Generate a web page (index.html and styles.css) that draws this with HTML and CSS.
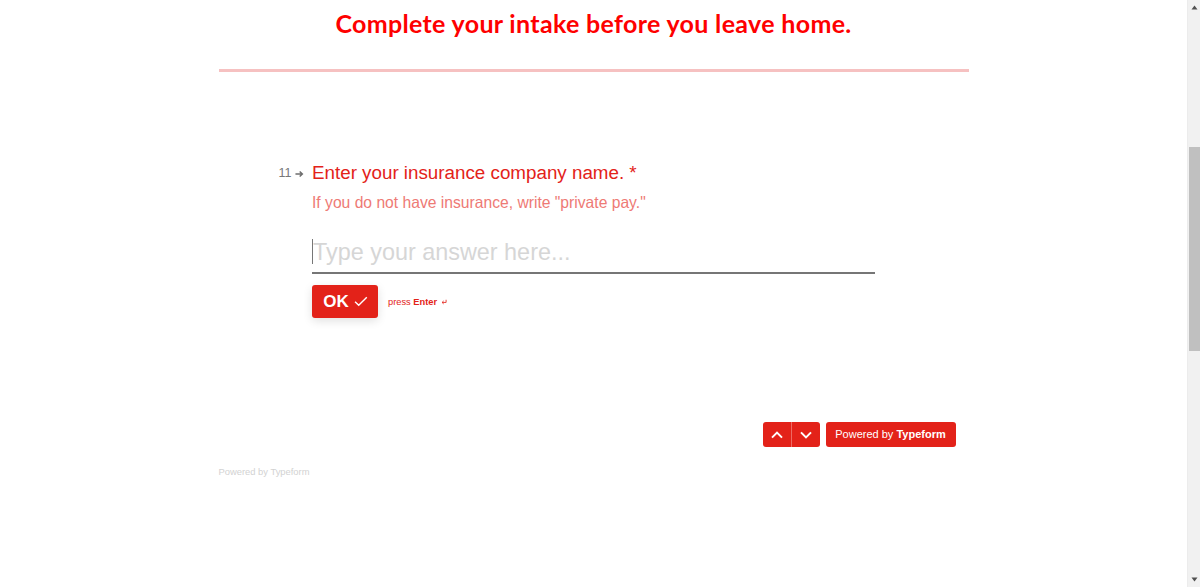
FILE: index.html
```html
<!DOCTYPE html>
<html lang="en">
<head>
<meta charset="utf-8">
<title>Intake</title>
<link rel="stylesheet" href="styles.css">
</head>
<body>
<div class="page">
  <main class="main">
    <div class="column">
      <h1 class="title">Complete your intake before you leave home.</h1>
      <div class="rule"></div>
      <section class="form">
        <div class="question">
          <div class="number"><span>11</span>
            <svg class="arrow" viewBox="0 0 10 8" width="9" height="8"><path d="M0.5 4H8M5.2 1.2L8.2 4L5.2 6.8" fill="none" stroke="#6d6d6d" stroke-width="1.6"/></svg>
          </div>
          <div class="content">
            <div class="label">Enter your insurance company name. <span class="star">*</span></div>
            <div class="hint">If you do not have insurance, write "private pay."</div>
            <div class="input"><span class="caret"></span><span class="placeholder">Type your answer here...</span></div>
            <div class="actions">
              <button class="ok" type="button">OK
                <svg viewBox="0 0 16 12" width="14" height="11"><path d="M1.2 6.4L5.4 10.4L14.6 1.2" fill="none" stroke="#fff" stroke-width="1.6"/></svg>
              </button>
              <span class="press"><span>press <b>Enter</b></span>
                <svg viewBox="0 0 8 8" width="6" height="6"><path d="M6.8 1V4.6H1.6M3.6 2.6L1.4 4.6L3.6 6.6" fill="none" stroke="#e32219" stroke-width="1.1"/></svg>
              </span>
            </div>
          </div>
        </div>
        <div class="footer-bar">
          <div class="nav">
            <button class="nav-btn" type="button"><svg viewBox="0 0 12 8" width="12" height="8"><path d="M1 6.6L6 1.6L11 6.6" fill="none" stroke="#fff" stroke-width="2"/></svg></button>
            <button class="nav-btn nav-next" type="button"><svg viewBox="0 0 12 8" width="12" height="8"><path d="M1 1.4L6 6.4L11 1.4" fill="none" stroke="#fff" stroke-width="2"/></svg></button>
          </div>
          <div class="brand">Powered by <b>Typeform</b></div>
        </div>
      </section>
      <div class="powered">Powered by Typeform</div>
    </div>
  </main>
  <aside class="scrollbar">
    <svg class="sb-arrow" viewBox="0 0 7 5" width="7" height="5"><path d="M3.5 0.5L6.5 4.5H0.5Z" fill="#505050"/></svg>
    <div class="track"><div class="thumb"></div></div>
    <svg class="sb-arrow" viewBox="0 0 7 5" width="7" height="5"><path d="M0.5 0.5H6.5L3.5 4.5Z" fill="#505050"/></svg>
  </aside>
</div>
</body>
</html>
```
FILE: styles.css
```css
* { box-sizing: border-box; }
html, body { margin: 0; padding: 0; height: 100%; background: #fff; overflow: hidden; }
body { font-family: "Liberation Sans", Arial, sans-serif; }
.page { display: flex; height: 587px; }
.main { flex: 1; min-width: 0; display: flex; justify-content: center; }
.column { width: 750px; }
.title {
  margin: 0; padding-top: 8px; height: 69px;
  font-family: Lato, sans-serif; font-weight: 700; font-size: 25px; line-height: 30px;
  letter-spacing: 0.33px;
  color: #fe0000; text-align: center; padding-left: 1px; padding-right: 1px;
}
.rule { height: 3px; background: #f6c1c1; }
.form { padding: 90px 13px 0 60px; }
.question { display: flex; }
.number {
  width: 33.5px; padding-top: 4px; display: flex; align-items: flex-start; gap: 4px;
  font-size: 12.5px; line-height: 15px; color: #777;
}
.arrow { margin-top: 4px; }
.content { width: 563px; }
.label { font-size: 18.8px; line-height: 22px; color: #e32219; }
.star { color: #e32219; }
.hint { margin-top: 7px; font-size: 15.67px; line-height: 24px; color: #ee7a75; }
.input {
  margin-top: 20px; height: 39px; border-bottom: 2px solid #767676;
  display: flex; align-items: flex-start; position: relative;
}
.caret { position: absolute; left: 0; top: 4px; width: 1px; height: 25px; background: #777; }
.placeholder { font-size: 23.4px; line-height: 28px; padding-top: 3px; color: #d6d6d6; padding-left: 1px; }
.actions { margin-top: 11px; display: flex; align-items: center; gap: 10px; }
.ok {
  width: 66px; height: 33px; border: 0; border-radius: 3px; padding: 0 0 0 1px;
  background: #e32219; color: #fff; font-family: inherit; font-weight: 700; font-size: 17px;
  display: flex; align-items: center; justify-content: center; gap: 5px;
  box-shadow: 0 3px 10px rgba(0,0,0,.12);
}
.press { font-size: 9.3px; color: #e32219; display: flex; align-items: center; gap: 4px; padding-top: 1px; }
.footer-bar { margin-top: 104px; display: flex; justify-content: flex-end; gap: 6px; }
.nav { display: flex; }
.nav-btn {
  width: 28.5px; height: 25px; border: 0; padding: 0; background: #e32219;
  border-radius: 3px 0 0 3px; display: flex; align-items: center; justify-content: center;
}
.nav-next { border-left: 1px solid #ee6a63; border-radius: 0 3px 3px 0; }
.brand {
  width: 130px; height: 25px; border-radius: 3px; background: #e32219; color: #fff;
  font-size: 11px; line-height: 25px; text-align: center;
}
.powered { margin-top: 19px; font-size: 9.4px; line-height: 12px; color: #d2d2d2; }
.scrollbar { width: 13px; background: #f1f1f1; border-left: 1px solid #ececec; display: flex; flex-direction: column; align-items: center; padding: 5px 0; }
.sb-arrow { flex: none; }
.track { flex: 1; width: 100%; padding-top: 137px; }
.thumb { width: 11px; margin: 0 auto; height: 204px; background: #c0c0c0; }
```
